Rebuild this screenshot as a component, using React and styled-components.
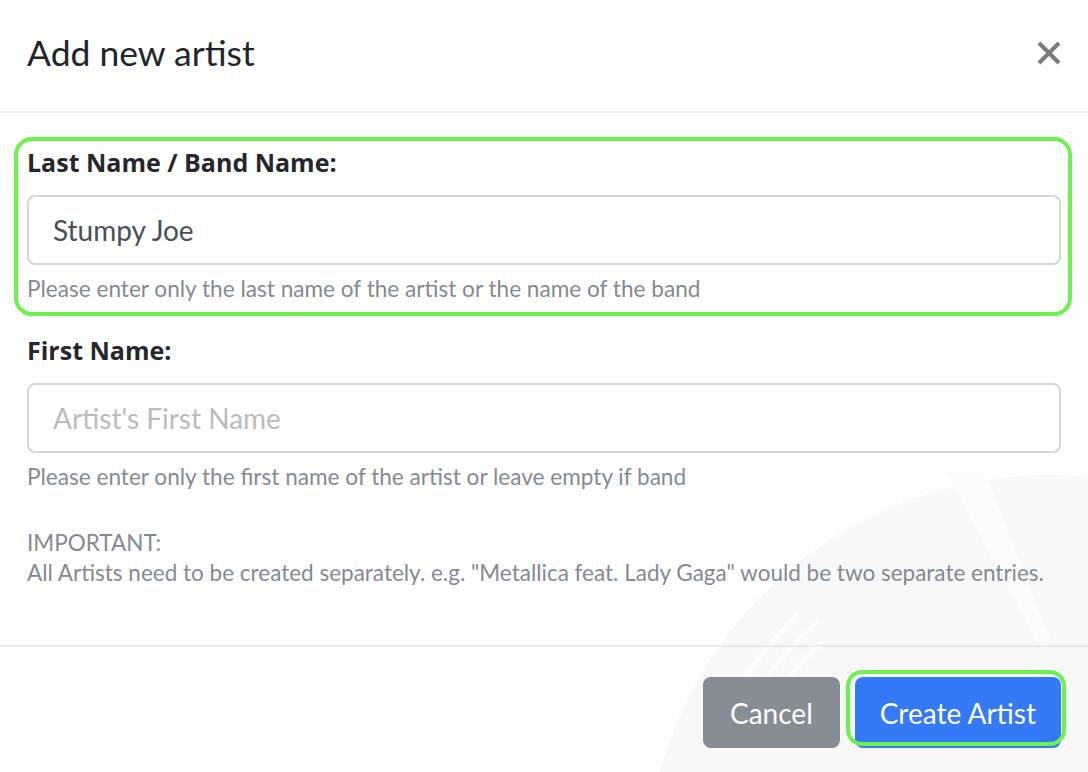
import React from 'react';
import styled, { createGlobalStyle } from 'styled-components';

const GlobalStyle = createGlobalStyle`
  html, body {
    margin: 0;
    padding: 0;
    background: #ffffff;
  }
  body {
    font-family: Lato, "Noto Sans", sans-serif;
    color: #212529;
  }
  * {
    box-sizing: border-box;
  }
`;

const Modal = styled.div`
  position: relative;
  width: 1088px;
  height: 772px;
  overflow: hidden;
  background: #ffffff;
  display: flex;
  flex-direction: column;
`;

const Watermark = styled.svg`
  position: absolute;
  left: 0;
  top: 0;
  width: 1088px;
  height: 772px;
  pointer-events: none;
  z-index: 0;
`;

const Header = styled.header`
  position: relative;
  z-index: 1;
  height: 113px;
  padding: 0 27px;
  display: flex;
  align-items: center;
  justify-content: space-between;
  border-bottom: 2px solid #ebebef;
`;

const Title = styled.h5`
  margin: 0 0 4px;
  font-size: 35.5px;
  font-weight: 400;
  line-height: 1.2;
  color: #212529;
`;

const Close = styled.button`
  width: 24px;
  height: 24px;
  margin: 0 0 6px 0;
  padding: 0;
  border: 0;
  background: none;
  display: flex;
  align-items: center;
  justify-content: center;
  cursor: pointer;
`;

const Body = styled.div`
  position: relative;
  z-index: 1;
  padding: 24px 16px 0 14px;
  height: 532px;
`;

const Group = styled.div`
  border: 4px solid ${p => (p.$highlight ? '#6cf24c' : 'transparent')};
  border-radius: 18px;
  padding: 7px 7px 10px 9px;
  margin-bottom: ${p => p.$gap || 0}px;
`;

const Label = styled.label`
  display: block;
  font-family: "Open Sans", Lato, sans-serif;
  font-size: 25px;
  font-weight: 700;
  line-height: 28px;
  color: #25272c;
  margin-bottom: 19px;
`;

const Input = styled.input`
  display: block;
  width: 100%;
  height: 70px;
  padding: 0 24px;
  font-family: Lato, "Noto Sans", sans-serif;
  font-size: 28px;
  color: #495057;
  background: #ffffff;
  border: 2px solid #d3d6da;
  border-radius: 8px;
  outline: none;

  &::placeholder {
    color: #b9bcbf;
    opacity: 1;
  }
`;

const Help = styled.small`
  display: block;
  margin-top: 10px;
  font-size: 22.6px;
  line-height: 1.2;
  color: #858a91;
`;

const Note = styled.p`
  margin: 24px 0 0 13px;
  font-size: 22.5px;
  line-height: 30px;
  color: #858a91;
`;

const Footer = styled.footer`
  position: relative;
  z-index: 1;
  flex: 1;
  border-top: 2px solid #ebebef;
  display: flex;
  justify-content: flex-end;
  align-items: flex-start;
  gap: 15px;
  padding: 30px 27px 0 0;
`;

const Button = styled.button`
  position: relative;
  height: 71px;
  padding: 0 ${p => (p.$primary ? 25 : 27)}px;
  font-family: Lato, "Noto Sans", sans-serif;
  font-size: 28px;
  font-weight: 400;
  color: #ffffff;
  background: ${p => (p.$primary ? '#3479f5' : '#878d95')};
  border: 0;
  border-radius: 8px;
  cursor: pointer;

  ${p =>
    p.$highlight &&
    `
    &::after {
      content: '';
      position: absolute;
      left: -9px;
      top: -7px;
      right: -5px;
      bottom: 2px;
      border: 4px solid #6cf24c;
      border-radius: 16px;
    }
  `}
`;

function Record() {
  const cx = 1050;
  const cy = 880;
  const arc = (r, a1, a2) => {
    const t1 = (a1 * Math.PI) / 180;
    const t2 = (a2 * Math.PI) / 180;
    const x1 = cx + r * Math.cos(t1);
    const y1 = cy + r * Math.sin(t1);
    const x2 = cx + r * Math.cos(t2);
    const y2 = cy + r * Math.sin(t2);
    return `M ${x1} ${y1} A ${r} ${r} 0 0 1 ${x2} ${y2}`;
  };
  return (
    <Watermark viewBox="0 0 1088 772">
      <circle cx={cx} cy={cy} r="405" fill="#f8f8f9" />
      <polygon points="946,472 985,472 1050,640 1038,644" fill="#fcfcfc" />
      <g fill="none" stroke="#fdfdfd" strokeWidth="5" strokeLinecap="round">
        <path d={arc(330, 208, 226)} />
        <path d={arc(348, 210, 228)} />
        <path d={arc(366, 212, 226)} />
        <path d={arc(220, 292, 312)} />
        <path d={arc(238, 294, 314)} />
      </g>
    </Watermark>
  );
}

export default function App() {
  return (
    <>
      <GlobalStyle />
      <Modal>
        <Record />
        <Header>
          <Title>Add new artist</Title>
          <Close aria-label="Close">
            <svg width="24" height="24" viewBox="0 0 24 24">
              <path d="M2 2 L22 22 M22 2 L2 22" stroke="#7b7b7b" strokeWidth="4" strokeLinecap="butt" />
            </svg>
          </Close>
        </Header>
        <Body>
          <Group $highlight $gap={9}>
            <Label>Last Name / Band Name:</Label>
            <Input defaultValue="Stumpy Joe" />
            <Help>Please enter only the last name of the artist or the name of the band</Help>
          </Group>
          <Group>
            <Label>First Name:</Label>
            <Input placeholder="Artist's First Name" />
            <Help>Please enter only the first name of the artist or leave empty if band</Help>
          </Group>
          <Note>
            IMPORTANT:
            <br />
            All Artists need to be created separately. e.g. "Metallica feat. Lady Gaga" would be two separate entries.
          </Note>
        </Body>
        <Footer>
          <Button>Cancel</Button>
          <Button $primary $highlight>Create Artist</Button>
        </Footer>
      </Modal>
    </>
  );
}
